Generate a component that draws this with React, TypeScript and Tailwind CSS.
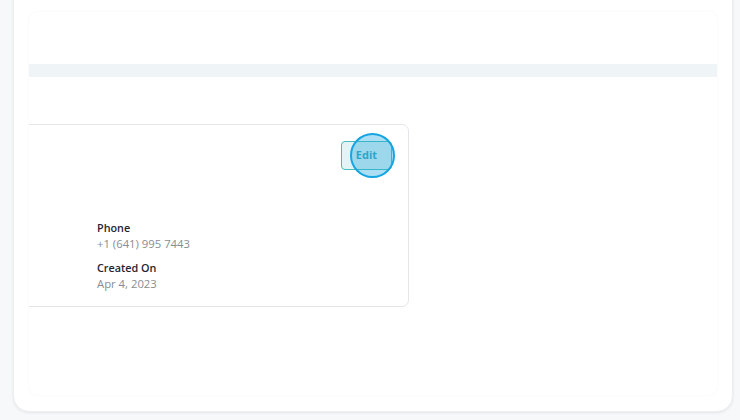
import React from "react";

export default function App() {
  return (
    <div
      className="h-[420px] w-[740px] overflow-hidden bg-[#f7f8fa] px-[13px]"
      style={{ fontFamily: '"Open Sans", "Noto Sans", sans-serif' }}
    >
      <div className="-mt-[16px] h-[428px] w-[720px] rounded-[16px] border border-[#eceef2] bg-white px-[15px] pt-[27px] shadow-[0_1px_3px_rgba(0,0,0,0.08)]">
        <div className="h-[383px] w-[688px] overflow-hidden rounded-[8px] bg-white shadow-[0_0_3px_rgba(0,0,0,0.045)]">
          <div className="h-[52px]" />
          <div className="h-[13px] bg-[#eff4f7]" />
          <div className="pt-[47px]">
            <div className="-ml-[40px] h-[183px] w-[420px] rounded-[7px] border border-[#e4e6ea] bg-white pt-[16px] pr-[16px] pl-[107px]">
              <div className="flex justify-end">
                <div className="relative">
                  <button className="h-[29px] w-[51px] rounded-[4px] border border-[#47bcbc] bg-[#e4f3f3] text-[11px] font-bold text-[#2fa2b8]">
                    Edit
                  </button>
                  <div className="pointer-events-none absolute -top-[8px] left-[9px] h-[45px] w-[45px] rounded-full border-2 border-[#17a5e2] bg-[rgba(40,170,225,0.38)]" />
                </div>
              </div>
              <div className="mt-[50px]">
                <div className="text-[10.8px] font-semibold leading-[16px] text-[#1f2430]">Phone</div>
                <div className="text-[11.3px] leading-[15px] text-[#8a8d93]">+1 (641) 995 7443</div>
                <div className="mt-[9px] text-[10.8px] font-semibold leading-[16px] text-[#1f2430]">Created On</div>
                <div className="text-[11.3px] leading-[15px] text-[#8a8d93]">Apr 4, 2023</div>
              </div>
            </div>
          </div>
        </div>
      </div>
    </div>
  );
}
